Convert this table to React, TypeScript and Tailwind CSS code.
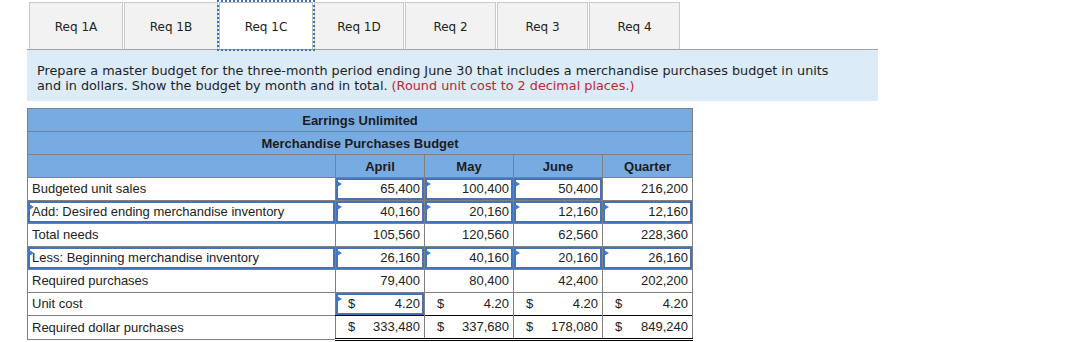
import React from "react";

const tabs: { t: string; w: string }[] = [
  { t: "Req 1A", w: "w-[94px]" },
  { t: "Req 1B", w: "w-[94px]" },
  { t: "Req 1C", w: "w-[94px]" },
  { t: "Req 1D", w: "w-[90px]" },
  { t: "Req 2", w: "w-[91px]" },
  { t: "Req 3", w: "w-[91px]" },
  { t: "Req 4", w: "w-[91px]" },
];

type Cell = { v: string; input?: boolean; dollar?: boolean };
type Row = { label: string; labelInput?: boolean; topBlack?: boolean; last?: boolean; cells: Cell[] };

const rows: Row[] = [
  {
    label: "Budgeted unit sales",
    cells: [
      { v: "65,400", input: true },
      { v: "100,400", input: true },
      { v: "50,400", input: true },
      { v: "216,200" },
    ],
  },
  {
    label: "Add: Desired ending merchandise inventory",
    labelInput: true,
    cells: [
      { v: "40,160", input: true },
      { v: "20,160", input: true },
      { v: "12,160", input: true },
      { v: "12,160", input: true },
    ],
  },
  {
    label: "Total needs",
    topBlack: true,
    cells: [{ v: "105,560" }, { v: "120,560" }, { v: "62,560" }, { v: "228,360" }],
  },
  {
    label: "Less: Beginning merchandise inventory",
    labelInput: true,
    cells: [
      { v: "26,160", input: true },
      { v: "40,160", input: true },
      { v: "20,160", input: true },
      { v: "26,160", input: true },
    ],
  },
  {
    label: "Required purchases",
    topBlack: true,
    cells: [{ v: "79,400" }, { v: "80,400" }, { v: "42,400" }, { v: "202,200" }],
  },
  {
    label: "Unit cost",
    cells: [
      { v: "4.20", input: true, dollar: true },
      { v: "4.20", dollar: true },
      { v: "4.20", dollar: true },
      { v: "4.20", dollar: true },
    ],
  },
  {
    label: "Required dollar purchases",
    topBlack: true,
    last: true,
    cells: [
      { v: "333,480", dollar: true },
      { v: "337,680", dollar: true },
      { v: "178,080", dollar: true },
      { v: "849,240", dollar: true },
    ],
  },
];

function Flag() {
  return (
    <span className="absolute left-[-1px] top-[1px] h-0 w-0 border-y-[3px] border-l-[5px] border-y-transparent border-l-[#3a7bd5]" />
  );
}

function NumCell({ c }: { c: Cell }) {
  if (c.input) {
    return (
      <div className="relative flex h-[22px] items-center justify-between border-2 border-[#4373b9] pr-[2px]">
        <Flag />
        {c.dollar ? <span className="pl-[10px]">$</span> : <span />}
        <span>{c.v}</span>
      </div>
    );
  }
  return (
    <div className="flex h-[22px] items-center justify-between pr-[4px]">
      {c.dollar ? <span className="pl-[12px]">$</span> : <span />}
      <span>{c.v}</span>
    </div>
  );
}

export default function App() {
  return (
    <div className="h-[342px] w-[1087px] overflow-hidden bg-white pl-[27px] text-[#222]">
      {/* tabs */}
      <div className="ml-[2px] flex gap-[1px] pt-[2px]">
        {tabs.map(({ t, w }) => {
          const active = t === "Req 1C";
          return (
            <div
              key={t}
              className={
                "flex h-[47px] items-center justify-center border-x border-t pt-[2px] text-[12px] " +
                w +
                " " +
                (active
                  ? "relative z-10 border-[#bdbdbd] bg-white outline-2 outline-dotted outline-[#3b72c2]"
                  : "border-[#c9c9c9] bg-[#f2f2f2]")
              }
              style={{ fontFamily: '"DejaVu Sans", Verdana, sans-serif' }}
            >
              {t}
            </div>
          );
        })}
      </div>

      {/* instructions */}
      <div
        className="w-[851px] border-t border-[#a3a3a3] bg-[#dbebf8] pb-[8px] pl-[10px] pt-[13px] text-[12.8px] leading-[15px] text-[#1e1e1e]"
        style={{ fontFamily: '"DejaVu Sans", Verdana, sans-serif' }}
      >
        Prepare a master budget for the three-month period ending June 30 that includes a merchandise purchases budget in units
        <br />
        and in dollars. Show the budget by month and in total.{" "}
        <span className="text-[#c1272d]">(Round unit cost to 2 decimal places.)</span>
      </div>

      {/* table */}
      <table
        className="mt-[7px] w-[665px] table-fixed border-collapse text-[13px] text-[#222]"
        style={{ fontFamily: '"Liberation Sans", Arial, sans-serif' }}
      >
        <colgroup>
          <col className="w-[308px]" />
          <col className="w-[89px]" />
          <col className="w-[89px]" />
          <col className="w-[89px]" />
          <col className="w-[90px]" />
        </colgroup>
        <tbody>
          <tr>
            <td colSpan={5} className="border border-[#808080] bg-[#79abe3] p-0">
              <div className="flex h-[22px] items-center justify-center pt-[1px] font-bold text-[#1c1c1c]">
                Earrings Unlimited
              </div>
            </td>
          </tr>
          <tr>
            <td colSpan={5} className="border border-[#808080] bg-[#79abe3] p-0">
              <div className="flex h-[22px] items-center justify-center pt-[1px] font-bold text-[#1c1c1c]">
                Merchandise Purchases Budget
              </div>
            </td>
          </tr>
          <tr>
            {["", "April", "May", "June", "Quarter"].map((h, i) => (
              <td key={i} className="border border-[#808080] bg-[#79abe3] p-0">
                <div className="flex h-[22px] items-center justify-center pt-[1px] font-bold text-[#1c1c1c]">{h}</div>
              </td>
            ))}
          </tr>
          {rows.map((r) => (
            <tr key={r.label}>
              <td className="border border-[#808080] p-0">
                {r.labelInput ? (
                  <div className="relative flex h-[22px] items-center border-2 border-[#4373b9] pl-[2px]">
                    <Flag />
                    {r.label}
                  </div>
                ) : (
                  <div className="flex h-[22px] items-center pl-[4px]">{r.label}</div>
                )}
              </td>
              {r.cells.map((c, i) => (
                <td
                  key={i}
                  className={
                    "border p-0 " +
                    (r.topBlack ? "border-x-[#808080] border-b-[#808080] border-t-black " : "border-[#808080] ") +
                    (r.last ? "border-b-[3px] border-double border-b-black" : "")
                  }
                >
                  <NumCell c={c} />
                </td>
              ))}
            </tr>
          ))}
        </tbody>
      </table>
    </div>
  );
}
